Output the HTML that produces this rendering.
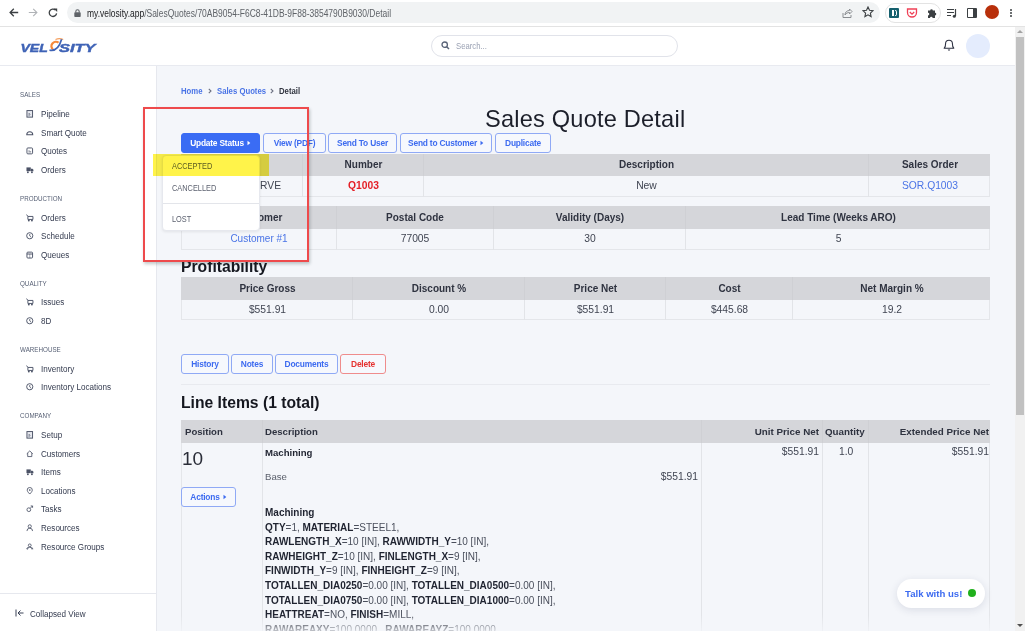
<!DOCTYPE html>
<html><head><meta charset="utf-8">
<style>
*{box-sizing:border-box;margin:0;padding:0}
html,body{width:1025px;height:631px;overflow:hidden;background:#fff;font-family:"Liberation Sans",sans-serif;color:#2d3142}
.a{position:absolute;white-space:nowrap}
#chrome{position:absolute;left:0;top:0;width:1025px;height:27px;background:#fff;border-bottom:1px solid #e3e3e3}
#url{position:absolute;left:67px;top:2px;width:813px;height:21px;border-radius:11px;background:#f1f3f4}
#hdr{position:absolute;left:0;top:27px;width:1015px;height:39px;background:#fff;border-bottom:1px solid #e8eaf0}
#side{position:absolute;left:0;top:66px;width:157px;height:565px;background:#fff;border-right:1px solid #e6e8ee}
#main{position:absolute;left:157px;top:66px;width:858px;height:565px;background:#f4f6fa;overflow:hidden}
#sb{position:absolute;left:1015px;top:27px;width:10px;height:604px;background:#f1f1f1}
.lbl{position:absolute;left:20px;font-size:6.8px;color:#555e73;line-height:8px;transform:scaleX(0.92);transform-origin:0 0}
.it{position:absolute;left:41px;font-size:9.2px;color:#333a4e;line-height:10px;transform:scaleX(0.88);transform-origin:0 0}
.ic{position:absolute;left:26px;width:7.5px;height:7.5px}
.btn{position:absolute;height:20px;border:1px solid #8fa9f5;border-radius:3px;color:#3d6bf0;font-size:8.4px;letter-spacing:-0.2px;font-weight:bold;text-align:center;line-height:18px;background:#f6f8fd}
.th{position:absolute;background:#d5d6da}
.tb{position:absolute;border:1px solid #e4e6ea;border-top:none;background:#f4f6fa}
.vl{position:absolute;width:1px;background:#e2e4e8}
.hc{position:absolute;padding-left:2px;font-size:10px;font-weight:bold;color:#2f3340;text-align:center;line-height:12px}
.bc{position:absolute;padding-left:2px;font-size:10.3px;color:#404552;text-align:center;line-height:12px}
.lnk{color:#4a74e6}
.pl{position:absolute;left:108px;font-size:10px;color:#4a4f5c;white-space:nowrap}
.pl b{color:#1f2330}
</style></head><body>
<!-- browser chrome -->
<div id="chrome">
  <svg class="a" style="left:9px;top:8px" width="10" height="9" viewBox="0 0 10 9"><path d="M9.2 4.5H1.2M4.8 0.8L1.1 4.5L4.8 8.2" stroke="#3c4043" stroke-width="1.3" fill="none"/></svg>
  <svg class="a" style="left:28px;top:8px" width="10" height="9" viewBox="0 0 10 9"><path d="M0.8 4.5h8M5.2 0.8L8.9 4.5L5.2 8.2" stroke="#b0b3b7" stroke-width="1.1" fill="none"/></svg>
  <svg class="a" style="left:48px;top:8px" width="10" height="10" viewBox="0 0 10 10"><path d="M8.6 5.3A3.7 3.7 0 1 1 7.4 2" stroke="#3c4043" stroke-width="1.3" fill="none"/><path d="M5.6 0.4h3.6v3.6z" fill="#3c4043"/></svg>
  <div id="url"></div>
  <svg class="a" style="left:74px;top:9px" width="7" height="8" viewBox="0 0 7 8"><rect x="0.3" y="3.2" width="6.4" height="4.8" rx="0.8" fill="#5f6368"/><path d="M1.8 3.5V2.4a1.7 1.7 0 0 1 3.4 0v1.1" stroke="#5f6368" stroke-width="1.1" fill="none"/></svg>
  <div class="a" style="left:87px;top:7px;font-size:10.6px;line-height:12px;color:#5f6368;transform:scaleX(0.80);transform-origin:0 0"><span style="color:#202124">my.velosity.app</span>/SalesQuotes/70AB9054-F6C8-41DB-9F88-3854790B9030/Detail</div>
  <svg class="a" style="left:841px;top:7px" width="12" height="12" viewBox="0 0 12 12"><path d="M2 6v4.5h8V8" stroke="#8a8d91" stroke-width="1" fill="none"/><path d="M4 8c0-3 2-4.5 4.5-4.5V2l2.5 2.5L8.5 7V5.5C6.5 5.5 5 6.3 4 8z" stroke="#8a8d91" stroke-width="1" fill="none"/></svg>
  <svg class="a" style="left:862px;top:6px" width="12" height="12" viewBox="0 0 12 12"><path d="M6 1l1.5 3.3 3.5.4-2.6 2.4.7 3.5L6 8.8 2.9 10.6l.7-3.5L1 4.7l3.5-.4z" stroke="#3c4043" stroke-width="1.1" fill="none"/></svg>
  <div class="a" style="left:885px;top:3px;width:56px;height:20px;border:1px solid #e3e3e3;border-radius:10px;background:#fff"></div>
  <div class="a" style="left:889px;top:8px;width:10px;height:10px;background:#16606e;border-radius:1px"></div>
  <div class="a" style="left:892px;top:10px;width:2px;height:6px;background:#fff"></div>
  <div class="a" style="left:895px;top:10px;width:2px;height:6px;border:1px solid #fff;border-left:none;border-radius:0 2px 2px 0"></div>
  <svg class="a" style="left:906px;top:7px" width="12" height="12" viewBox="0 0 12 12"><path d="M1.5 2h9v3.5a4.5 4.5 0 0 1-9 0z" stroke="#ef4056" stroke-width="1.3" fill="none"/><path d="M3.8 5l2.2 2.2L8.2 5" stroke="#ef4056" stroke-width="1.3" fill="none"/></svg>
  <svg class="a" style="left:926px;top:7px" width="12" height="12" viewBox="0 0 12 12"><path d="M2 3.5h2.2a1.3 1.3 0 0 1 2.6 0H9v2.3a1.3 1.3 0 0 1 0 2.6V11H6.6a1.3 1.3 0 0 0-2.6 0H2V8.4a1.3 1.3 0 0 0 0-2.6z" fill="#3c4043"/></svg>
  <svg class="a" style="left:946px;top:7px" width="12" height="12" viewBox="0 0 12 12"><path d="M1 2.5h7M1 5.5h7M1 8.5h4" stroke="#3c4043" stroke-width="1.2"/><path d="M9.5 2v7" stroke="#3c4043" stroke-width="1.2"/><circle cx="8.3" cy="9.2" r="1.5" fill="#3c4043"/></svg>
  <div class="a" style="left:967px;top:8px;width:10px;height:10px;border:1.5px solid #3c4043;border-right-width:4px;border-radius:1px"></div>
  <div class="a" style="left:985px;top:5px;width:14px;height:14px;border-radius:50%;background:#b8300b"></div>
  <div class="a" style="left:1010px;top:9px;width:2px;height:2px;border-radius:1px;background:#3c4043;box-shadow:0 3px 0 #3c4043,0 6px 0 #3c4043"></div>
</div>

<!-- app header -->
<div id="hdr">
  <svg class="a" style="left:18px;top:8px" width="82" height="22" viewBox="0 0 82 22">
    <text x="2.4" y="17.3" font-family="Liberation Sans" font-weight="bold" font-style="italic" font-size="10.4" fill="#3f63b6" stroke="#3f63b6" stroke-width="0.4" textLength="27.4" lengthAdjust="spacingAndGlyphs">VEL</text>
    <text x="41" y="17.3" font-family="Liberation Sans" font-weight="bold" font-style="italic" font-size="10.4" fill="#3f63b6" stroke="#3f63b6" stroke-width="0.4" textLength="36.6" lengthAdjust="spacingAndGlyphs">SITY</text>
    <path d="M40.6 7.6 A4 3.6 -20 1 0 35 14.2" stroke="#f5893a" stroke-width="2.2" fill="none"/>
    <path d="M37.5 4.6 Q41.5 2.6 45.2 4.6" stroke="#f5a060" stroke-width="1.1" fill="none"/>
    <path d="M31.5 15.2 Q40 17 43.6 4.3" stroke="#3f63b6" stroke-width="1.7" fill="none"/>
  </svg>
  <div class="a" style="left:431px;top:8px;width:247px;height:22px;border:1px solid #e1e3ea;border-radius:11px;background:#fff"></div>
  <svg class="a" style="left:441px;top:14px" width="9" height="9" viewBox="0 0 9 9"><circle cx="3.7" cy="3.7" r="2.7" stroke="#5a6478" stroke-width="1.3" fill="none"/><path d="M5.7 5.7L8 8" stroke="#5a6478" stroke-width="1.5"/></svg>
  <div class="a" style="left:456px;top:14px;font-size:8.4px;line-height:10px;color:#9aa1b3;transform:scaleX(0.92);transform-origin:0 0">Search...</div>
  <svg class="a" style="left:943px;top:11px" width="12" height="14" viewBox="0 0 12 14"><path d="M1.2 10.2C2.4 9.2 2.6 7.5 2.6 5.6A3.4 3.4 0 0 1 9.4 5.6C9.4 7.5 9.6 9.2 10.8 10.2Z" stroke="#2d3142" stroke-width="1.1" fill="none" stroke-linejoin="round"/><path d="M4.6 11.6h2.8L6 13.1z" fill="#2d3142"/></svg>
  <div class="a" style="left:966px;top:7px;width:24px;height:24px;border-radius:50%;background:#e4ecfd"></div>
</div>

<!-- sidebar -->
<div id="side">
  <div class="lbl" style="top:25px">SALES</div>
  <svg class="ic" style="top:44px" viewBox="0 0 8 8"><rect x="1" y="0.6" width="6" height="7" stroke="#4b5266" stroke-width="1" fill="#e6e8ee"/><path d="M3.3 6.5V3.5L4.5 5" stroke="#4b5266" stroke-width="0.7" fill="none"/></svg>
  <div class="it" style="top:43px">Pipeline</div>
  <svg class="ic" style="top:63px" viewBox="0 0 8 8"><path d="M0.8 6.2h6.4C7.2 4.5 6 3 4 3S0.8 4.5 0.8 6.2z" stroke="#4b5266" stroke-width="1.1" fill="none"/></svg>
  <div class="it" style="top:62px">Smart Quote</div>
  <svg class="ic" style="top:81px" viewBox="0 0 8 8"><rect x="1" y="1" width="6" height="6.3" rx="1" stroke="#4b5266" stroke-width="1" fill="none"/><path d="M2.5 5.2h3M3 3.5l1 1" stroke="#4b5266" stroke-width="0.8"/></svg>
  <div class="it" style="top:80px">Quotes</div>
  <svg class="ic" style="top:100px" viewBox="0 0 8 8"><rect x="0.5" y="1.5" width="4.6" height="4" fill="#4b5266"/><path d="M5.3 2.8h1.6l1 1.3v1.4H5.3z" fill="#4b5266"/><circle cx="2" cy="6.6" r="1" fill="#4b5266"/><circle cx="6.3" cy="6.6" r="1" fill="#4b5266"/></svg>
  <div class="it" style="top:99px">Orders</div>
  <div class="lbl" style="top:129px">PRODUCTION</div>
  <svg class="ic" style="top:148px" viewBox="0 0 8 8"><path d="M0.6 0.6L2 2.6V5.8h5.4V2.6H2" stroke="#4b5266" stroke-width="1" fill="none"/><circle cx="3" cy="7" r="1" fill="#4b5266"/><circle cx="6.3" cy="7" r="1" fill="#4b5266"/></svg>
  <div class="it" style="top:147px">Orders</div>
  <svg class="ic" style="top:166px" viewBox="0 0 8 8"><circle cx="4" cy="4" r="3.3" stroke="#4b5266" stroke-width="1" fill="none"/><path d="M4 2.2v2l1.3 1.2" stroke="#4b5266" stroke-width="0.9" fill="none"/></svg>
  <div class="it" style="top:165px">Schedule</div>
  <svg class="ic" style="top:185px" viewBox="0 0 8 8"><rect x="1" y="1.2" width="6" height="6.3" rx="1" stroke="#4b5266" stroke-width="1" fill="none"/><path d="M1 3.2h6" stroke="#4b5266" stroke-width="1"/><path d="M4 3.2v4.3" stroke="#4b5266" stroke-width="0.5"/></svg>
  <div class="it" style="top:184px">Queues</div>
  <div class="lbl" style="top:214px">QUALITY</div>
  <svg class="ic" style="top:232px" viewBox="0 0 8 8"><path d="M0.6 0.6L2 2.6V5.8h5.4V2.6H2" stroke="#4b5266" stroke-width="1" fill="none"/><circle cx="3" cy="7" r="1" fill="#4b5266"/><circle cx="6.3" cy="7" r="1" fill="#4b5266"/></svg>
  <div class="it" style="top:231px">Issues</div>
  <svg class="ic" style="top:251px" viewBox="0 0 8 8"><circle cx="4" cy="4" r="3.3" stroke="#4b5266" stroke-width="1" fill="none"/><path d="M4 2.2v2l1.3 1.2" stroke="#4b5266" stroke-width="0.9" fill="none"/></svg>
  <div class="it" style="top:250px">8D</div>
  <div class="lbl" style="top:280px">WAREHOUSE</div>
  <svg class="ic" style="top:299px" viewBox="0 0 8 8"><path d="M0.6 0.6L2 2.6V5.8h5.4V2.6H2" stroke="#4b5266" stroke-width="1" fill="none"/><circle cx="3" cy="7" r="1" fill="#4b5266"/><circle cx="6.3" cy="7" r="1" fill="#4b5266"/></svg>
  <div class="it" style="top:298px">Inventory</div>
  <svg class="ic" style="top:317px" viewBox="0 0 8 8"><circle cx="4" cy="4" r="3.3" stroke="#4b5266" stroke-width="1" fill="none"/><path d="M4 2.2v2l1.3 1.2" stroke="#4b5266" stroke-width="0.9" fill="none"/></svg>
  <div class="it" style="top:316px">Inventory Locations</div>
  <div class="lbl" style="top:346px">COMPANY</div>
  <svg class="ic" style="top:365px" viewBox="0 0 8 8"><rect x="1" y="0.6" width="6" height="7" stroke="#4b5266" stroke-width="1" fill="#e6e8ee"/><path d="M3.3 6.5V3.5L4.5 5" stroke="#4b5266" stroke-width="0.7" fill="none"/></svg>
  <div class="it" style="top:364px">Setup</div>
  <svg class="ic" style="top:384px" viewBox="0 0 8 8"><path d="M0.8 4L4 1l3.2 3M1.8 3.3V7h4.4V3.3" stroke="#4b5266" stroke-width="0.9" fill="none"/></svg>
  <div class="it" style="top:383px">Customers</div>
  <svg class="ic" style="top:402px" viewBox="0 0 8 8"><rect x="0.5" y="1.5" width="4.6" height="4" fill="#4b5266"/><path d="M5.3 2.8h1.6l1 1.3v1.4H5.3z" fill="#4b5266"/><circle cx="2" cy="6.6" r="1" fill="#4b5266"/><circle cx="6.3" cy="6.6" r="1" fill="#4b5266"/></svg>
  <div class="it" style="top:401px">Items</div>
  <svg class="ic" style="top:421px" viewBox="0 0 8 8"><path d="M4 7.5C2 5.5 1.3 4.3 1.3 3.2a2.7 2.7 0 0 1 5.4 0C6.7 4.3 6 5.5 4 7.5z" stroke="#4b5266" stroke-width="0.9" fill="none"/><circle cx="4" cy="3.2" r="0.9" fill="#4b5266"/></svg>
  <div class="it" style="top:420px">Locations</div>
  <svg class="ic" style="top:439px" viewBox="0 0 8 8"><circle cx="3" cy="5" r="2" stroke="#4b5266" stroke-width="0.9" fill="none"/><path d="M4.5 3.5L7 1M5 1h2v2" stroke="#4b5266" stroke-width="0.9" fill="none"/></svg>
  <div class="it" style="top:438px">Tasks</div>
  <svg class="ic" style="top:458px" viewBox="0 0 8 8"><circle cx="4" cy="2.5" r="1.7" stroke="#4b5266" stroke-width="0.9" fill="none"/><path d="M1 7.5a3 3 0 0 1 6 0" stroke="#4b5266" stroke-width="0.9" fill="none"/></svg>
  <div class="it" style="top:457px">Resources</div>
  <svg class="ic" style="top:477px" viewBox="0 0 8 8"><circle cx="4" cy="2.5" r="1.5" stroke="#4b5266" stroke-width="0.9" fill="none"/><path d="M1.5 7a2.5 2.5 0 0 1 5 0M0.5 6.5l1.5-2M7.5 6.5l-1.5-2" stroke="#4b5266" stroke-width="0.9" fill="none"/></svg>
  <div class="it" style="top:476px">Resource Groups</div>
  <div class="a" style="left:0;top:527px;width:156px;height:1px;background:#e6e8ee"></div>
  <svg class="a" style="left:15px;top:543px" width="9" height="8" viewBox="0 0 9 8"><path d="M1 0.5v7M8.5 4H3M5.5 1.5L3 4l2.5 2.5" stroke="#3b4256" stroke-width="1" fill="none"/></svg>
  <div class="it" style="left:30px;top:543px">Collapsed View</div>
</div>

<!-- main -->
<div id="main">
  <!-- breadcrumb (main coords: x-157, y-66) -->
  <div class="a" style="left:24.4px;top:20px;font-size:9px;font-weight:bold;line-height:10px;color:#4a74e6;transform:scaleX(0.86);transform-origin:0 0">Home</div>
  <svg class="a" style="left:51px;top:22px" width="4" height="6" viewBox="0 0 4 6"><path d="M0.8 0.8L3 3L0.8 5.2" stroke="#6b7080" stroke-width="1.1" fill="none"/></svg>
  <div class="a" style="left:59.8px;top:20px;font-size:9px;font-weight:bold;line-height:10px;color:#4a74e6;transform:scaleX(0.86);transform-origin:0 0">Sales Quotes</div>
  <svg class="a" style="left:113px;top:22px" width="4" height="6" viewBox="0 0 4 6"><path d="M0.8 0.8L3 3L0.8 5.2" stroke="#6b7080" stroke-width="1.1" fill="none"/></svg>
  <div class="a" style="left:121.6px;top:20px;font-size:9px;font-weight:bold;line-height:10px;color:#30343f;transform:scaleX(0.86);transform-origin:0 0">Detail</div>
  <!-- title -->
  <div class="a" style="left:328px;top:39px;font-size:23.6px;letter-spacing:0.2px;line-height:28px;color:#1c1f2a">Sales Quote Detail</div>
  <!-- buttons -->
  <div class="btn" style="left:24px;top:67px;width:79px;background:#3a6cf4;border-color:#3a6cf4;color:#fff">Update Status<svg width="4" height="6" viewBox="0 0 4 6" style="margin-left:3px;vertical-align:0px"><path d="M0.5 0.8L3.3 3L0.5 5.2z" fill="#fff"/></svg></div>
  <div class="btn" style="left:106px;top:67px;width:63px">View (PDF)</div>
  <div class="btn" style="left:171px;top:67px;width:69px">Send To User</div>
  <div class="btn" style="left:243px;top:67px;width:92px">Send to Customer<svg width="4" height="6" viewBox="0 0 4 6" style="margin-left:3px;vertical-align:0px"><path d="M0.5 0.8L3.3 3L0.5 5.2z" fill="#3d6bf0"/></svg></div>
  <div class="btn" style="left:338px;top:67px;width:56px">Duplicate</div>

  <!-- table 1: y 154-176-197 -->
  <div class="th" style="left:24px;top:88px;width:809px;height:22px"></div>
  <div class="tb" style="left:24px;top:110px;width:809px;height:21px"></div>
  <div class="vl" style="left:145px;top:88px;height:43px;background:#cfd0d4"></div>
  <div class="vl" style="left:266px;top:88px;height:43px;background:#cfd0d4"></div>
  <div class="vl" style="left:711px;top:88px;height:43px;background:#cfd0d4"></div>
  <div class="vl" style="left:145px;top:110px;height:21px"></div>
  <div class="vl" style="left:266px;top:110px;height:21px"></div>
  <div class="vl" style="left:711px;top:110px;height:21px"></div>
  <div class="hc" style="left:24px;top:93px;width:121px">Status</div>
  <div class="hc" style="left:145px;top:93px;width:121px">Number</div>
  <div class="hc" style="left:266px;top:93px;width:445px">Description</div>
  <div class="hc" style="left:711px;top:93px;width:122px">Sales Order</div>
  <div class="bc" style="left:73px;top:114px;text-align:left">RESERVE</div>
  <div class="bc" style="left:145px;top:114px;width:121px;font-weight:bold;color:#e41f26">Q1003</div>
  <div class="bc" style="left:266px;top:114px;width:445px">New</div>
  <div class="bc lnk" style="left:711px;top:114px;width:122px">SOR.Q1003</div>

  <!-- table 2: y 207-229-249 -->
  <div class="th" style="left:24px;top:140px;width:809px;height:23px"></div>
  <div class="tb" style="left:24px;top:163px;width:809px;height:21px"></div>
  <div class="vl" style="left:179px;top:140px;height:23px;background:#cfd0d4"></div>
  <div class="vl" style="left:336px;top:140px;height:23px;background:#cfd0d4"></div>
  <div class="vl" style="left:528px;top:140px;height:23px;background:#cfd0d4"></div>
  <div class="vl" style="left:179px;top:163px;height:21px"></div>
  <div class="vl" style="left:336px;top:163px;height:21px"></div>
  <div class="vl" style="left:528px;top:163px;height:21px"></div>
  <div class="hc" style="left:24px;top:146px;width:154px">Customer</div>
  <div class="hc" style="left:178px;top:146px;width:158px">Postal Code</div>
  <div class="hc" style="left:336px;top:146px;width:192px">Validity (Days)</div>
  <div class="hc" style="left:528px;top:146px;width:305px">Lead Time (Weeks ARO)</div>
  <div class="bc lnk" style="left:24px;top:167px;width:154px;font-size:10px">Customer #1</div>
  <div class="bc" style="left:178px;top:167px;width:158px">77005</div>
  <div class="bc" style="left:336px;top:167px;width:192px">30</div>
  <div class="bc" style="left:528px;top:167px;width:305px">5</div>

  <!-- Profitability -->
  <div class="a" style="left:24px;top:192px;font-size:15.7px;font-weight:bold;line-height:18px;color:#15171f">Profitability</div>
  <div class="th" style="left:24px;top:211px;width:809px;height:23px"></div>
  <div class="tb" style="left:24px;top:234px;width:809px;height:20px"></div>
  <div class="vl" style="left:195px;top:211px;height:23px;background:#cfd0d4"></div>
  <div class="vl" style="left:367px;top:211px;height:23px;background:#cfd0d4"></div>
  <div class="vl" style="left:508px;top:211px;height:23px;background:#cfd0d4"></div>
  <div class="vl" style="left:635px;top:211px;height:23px;background:#cfd0d4"></div>
  <div class="vl" style="left:195px;top:234px;height:20px"></div>
  <div class="vl" style="left:367px;top:234px;height:20px"></div>
  <div class="vl" style="left:508px;top:234px;height:20px"></div>
  <div class="vl" style="left:635px;top:234px;height:20px"></div>
  <div class="hc" style="left:24px;top:217px;width:171px">Price Gross</div>
  <div class="hc" style="left:195px;top:217px;width:172px">Discount %</div>
  <div class="hc" style="left:367px;top:217px;width:141px">Price Net</div>
  <div class="hc" style="left:508px;top:217px;width:127px">Cost</div>
  <div class="hc" style="left:635px;top:217px;width:198px">Net Margin %</div>
  <div class="bc" style="left:24px;top:238px;width:171px">$551.91</div>
  <div class="bc" style="left:195px;top:238px;width:172px">0.00</div>
  <div class="bc" style="left:367px;top:238px;width:141px">$551.91</div>
  <div class="bc" style="left:508px;top:238px;width:127px">$445.68</div>
  <div class="bc" style="left:635px;top:238px;width:198px">19.2</div>

  <!-- second button row -->
  <div class="btn" style="left:24px;top:288px;width:48px">History</div>
  <div class="btn" style="left:74px;top:288px;width:42px">Notes</div>
  <div class="btn" style="left:118px;top:288px;width:63px">Documents</div>
  <div class="btn" style="left:183px;top:288px;width:46px;border-color:#ef8c8c;color:#e5312f">Delete</div>
  <div class="a" style="left:24px;top:318px;width:809px;height:1px;background:#e8eaef"></div>

  <div class="a" style="left:24px;top:328px;font-size:15.7px;font-weight:bold;line-height:18px;color:#15171f">Line Items (1 total)</div>

  <!-- line items table -->
  <div class="th" style="left:24px;top:354px;width:809px;height:23px"></div>
  <div class="a" style="left:24px;top:377px;width:809px;height:200px;border-left:1px solid #e4e6ea;border-right:1px solid #e4e6ea"></div>
  <div class="vl" style="left:105px;top:354px;height:23px;background:#cfd0d4"></div>
  <div class="vl" style="left:544px;top:354px;height:23px;background:#cfd0d4"></div>
  <div class="vl" style="left:665px;top:354px;height:23px;background:#cfd0d4"></div>
  <div class="vl" style="left:711px;top:354px;height:23px;background:#cfd0d4"></div>
  <div class="vl" style="left:105px;top:377px;height:200px"></div>
  <div class="vl" style="left:544px;top:377px;height:200px"></div>
  <div class="vl" style="left:665px;top:377px;height:200px"></div>
  <div class="vl" style="left:711px;top:377px;height:200px"></div>
  <div class="a" style="left:28px;top:360px;font-size:9.6px;font-weight:bold;line-height:12px;color:#2f3340">Position</div>
  <div class="a" style="left:108px;top:360px;font-size:9.6px;font-weight:bold;line-height:12px;color:#2f3340">Description</div>
  <div class="a" style="left:562px;width:100px;text-align:right;top:360px;font-size:9.8px;font-weight:bold;line-height:12px;color:#2f3340">Unit Price Net</div>
  <div class="a" style="left:668px;top:360px;font-size:9.8px;font-weight:bold;line-height:12px;color:#2f3340">Quantity</div>
  <div class="a" style="left:732px;width:100px;text-align:right;top:360px;font-size:9.8px;font-weight:bold;line-height:12px;color:#2f3340">Extended Price Net</div>
  <div class="a" style="left:25px;top:382px;font-size:19px;line-height:22px;color:#2a2d38">10</div>
  <div class="btn" style="left:24px;top:421px;width:55px">Actions<svg width="4" height="6" viewBox="0 0 4 6" style="margin-left:3px;vertical-align:0px"><path d="M0.5 0.8L3.3 3L0.5 5.2z" fill="#3d6bf0"/></svg></div>
  <div class="a" style="left:108px;top:381px;font-size:9.6px;font-weight:bold;line-height:12px;color:#1f2330">Machining</div>
  <div class="a" style="left:108px;top:405px;font-size:9.6px;line-height:12px;color:#5a5f6b">Base</div>
  <div class="a" style="left:441px;width:100px;text-align:right;top:405px;font-size:10.3px;line-height:12px;color:#404552">$551.91</div>
  <div class="a" style="left:562px;width:100px;text-align:right;top:380px;font-size:10.3px;line-height:12px;color:#404552">$551.91</div>
  <div class="a" style="left:682px;top:380px;font-size:10.3px;line-height:12px;color:#404552">1.0</div>
  <div class="a" style="left:732px;width:100px;text-align:right;top:380px;font-size:10.3px;line-height:12px;color:#404552">$551.91</div>
  <div class="pl" style="top:440px;line-height:14.6px"><b>Machining</b><br><b>QTY</b>=1, <b>MATERIAL</b>=STEEL1,<br><b>RAWLENGTH_X</b>=10 [IN], <b>RAWWIDTH_Y</b>=10 [IN],<br><b>RAWHEIGHT_Z</b>=10 [IN], <b>FINLENGTH_X</b>=9 [IN],<br><b>FINWIDTH_Y</b>=9 [IN], <b>FINHEIGHT_Z</b>=9 [IN],<br><b>TOTALLEN_DIA0250</b>=0.00 [IN], <b>TOTALLEN_DIA0500</b>=0.00 [IN],<br><b>TOTALLEN_DIA0750</b>=0.00 [IN], <b>TOTALLEN_DIA1000</b>=0.00 [IN],<br><b>HEATTREAT</b>=NO, <b>FINISH</b>=MILL,<br><b>RAWAREAXY</b>=100.0000 , <b>RAWAREAYZ</b>=100.0000</div>
  <div class="a" style="left:0;top:549px;width:858px;height:16px;background:linear-gradient(rgba(244,246,250,0),rgba(244,246,250,0.75))"></div>
</div>


<!-- dropdown -->
<div class="a" style="left:162px;top:155px;width:98px;height:76px;background:#fff;border:1px solid #e6e8ee;border-radius:4px;box-shadow:0 1px 3px rgba(0,0,0,0.08)"></div>
<div class="a" style="left:163px;top:203px;width:96px;height:1px;background:#e3e5ea"></div>
<div class="a" style="left:172px;top:161px;font-size:8.6px;line-height:10px;color:#5d6270;transform:scaleX(0.86);transform-origin:0 0">ACCEPTED</div>
<div class="a" style="left:172px;top:183px;font-size:8.6px;line-height:10px;color:#5d6270;transform:scaleX(0.86);transform-origin:0 0">CANCELLED</div>
<div class="a" style="left:172px;top:214px;font-size:8.6px;line-height:10px;color:#5d6270;transform:scaleX(0.86);transform-origin:0 0">LOST</div>
<div class="a" style="left:153px;top:154px;width:116px;height:22px;background:#fff34a;mix-blend-mode:multiply"></div>
<!-- red annotation box -->
<div class="a" style="left:143px;top:107px;width:166px;height:155px;border:2px solid #ee4a4c;box-shadow:1px 2px 3px rgba(40,60,60,0.28)"></div>
<!-- talk with us -->
<div class="a" style="left:897px;top:579px;width:88px;height:29px;border-radius:15px;background:#fff;box-shadow:0 2px 8px rgba(30,40,80,0.12)"></div>
<div class="a" style="left:905px;top:588px;font-size:9.6px;font-weight:bold;line-height:11px;color:#3d6bf0">Talk with us!</div>
<div class="a" style="left:968px;top:589px;width:8px;height:8px;border-radius:50%;background:#20b01c"></div>
<div id="sb"><div class="a" style="left:1px;top:10px;width:8px;height:378px;background:#c1c1c1"></div><div class="a" style="left:2px;top:3px;width:0;height:0;border-left:3px solid transparent;border-right:3px solid transparent;border-bottom:3px solid #a3a3a3"></div><div class="a" style="left:2px;top:597px;width:0;height:0;border-left:3px solid transparent;border-right:3px solid transparent;border-top:3px solid #505050"></div></div>
</body></html>
